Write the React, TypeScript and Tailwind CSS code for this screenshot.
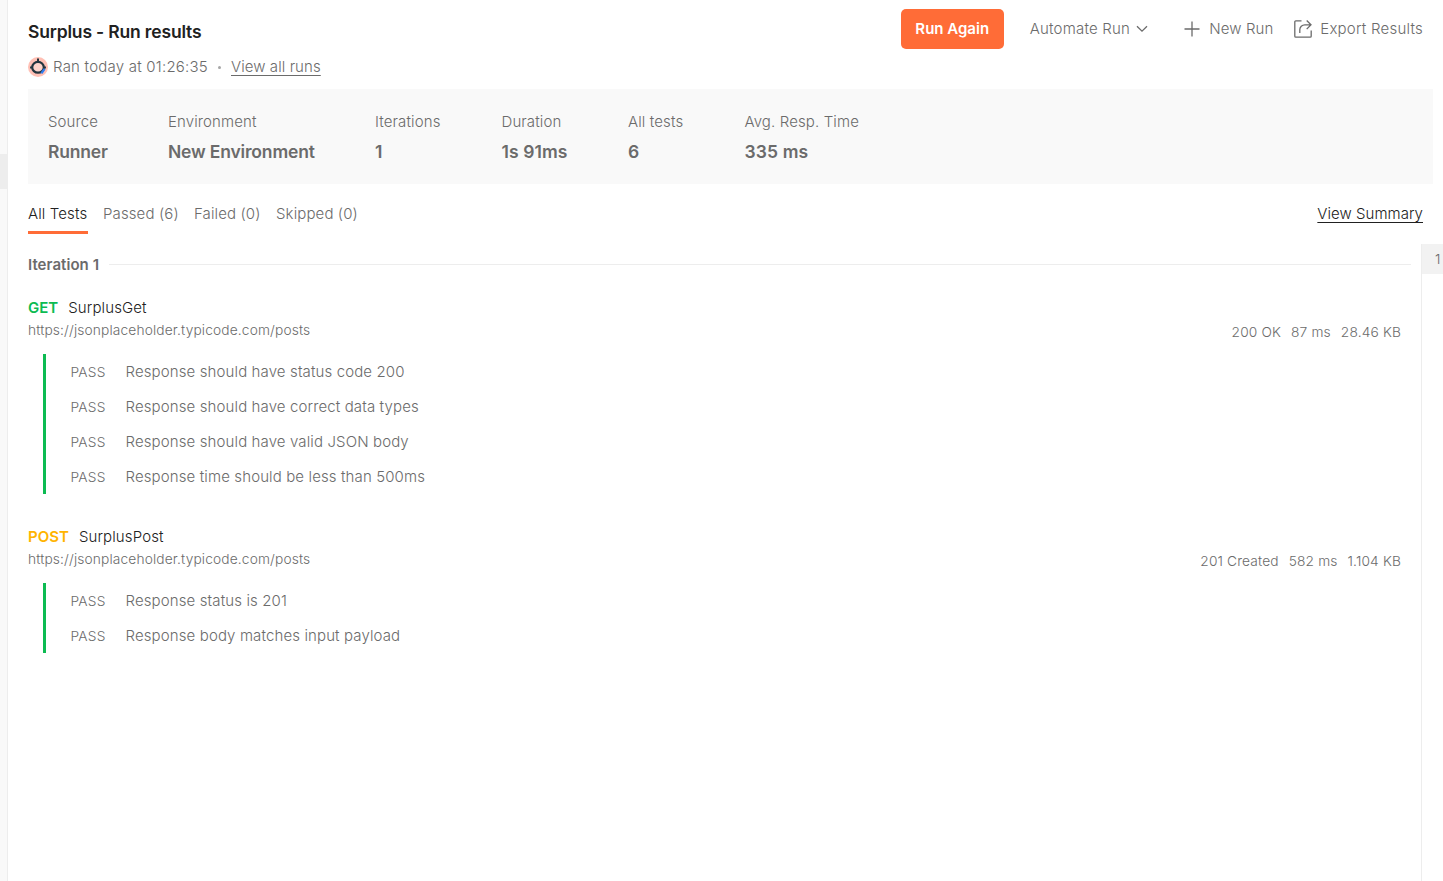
type Run = {
  method: string;
  color: string;
  name: string;
  meta: string[];
  tests: string[];
};

const stats = [
  { label: "Source", value: "Runner", box: "w-[120px]", dd: "tracking-[-0.17px]" },
  { label: "Environment", value: "New Environment", box: "w-[207px]", dd: "tracking-[-0.17px]" },
  { label: "Iterations", value: "1", box: "w-[126.5px]", dd: "" },
  { label: "Duration", value: "1s 91ms", box: "w-[126.5px]", dd: "tracking-[0.1px]" },
  { label: "All tests", value: "6", box: "w-[116.5px]", dd: "" },
  { label: "Avg. Resp. Time", value: "335 ms", box: "w-[120px]", dd: "" },
];

const runs: Run[] = [
  {
    method: "GET",
    color: "text-[#0cbb52]",
    name: "SurplusGet",
    meta: ["200 OK", "87 ms", "28.46 KB"],
    tests: [
      "Response should have status code 200",
      "Response should have correct data types",
      "Response should have valid JSON body",
      "Response time should be less than 500ms",
    ],
  },
  {
    method: "POST",
    color: "text-[#ffb400]",
    name: "SurplusPost",
    meta: ["201 Created", "582 ms", "1.104 KB"],
    tests: ["Response status is 201", "Response body matches input payload"],
  },
];

function Avatar() {
  return (
    <svg width="20" height="20" viewBox="0 0 20 20" className="shrink-0">
      <circle cx="10" cy="10" r="10" fill="#ffc0b5" />
      <path d="M2 10.5h2M16 10.5h2" stroke="#2b3c46" strokeWidth="2" />
      <ellipse cx="10" cy="10.3" rx="5.8" ry="5.4" fill="#ffd3ca" stroke="#24353f" strokeWidth="2.2" />
      <path d="M13.4 16.4l3.2-4.6" stroke="#2f7df0" strokeWidth="2.2" />
      <path d="M10 1.6v3" stroke="#24353f" strokeWidth="2" />
    </svg>
  );
}

function Toolbar() {
  return (
    <div className="flex h-10 items-center">
      <button className="h-10 w-[103px] rounded-[5px] bg-[#ff6c37] text-[15px] font-semibold tracking-normal text-white">
        Run Again
      </button>
      <button className="ml-[26px] flex items-center">
        <span className="w-[100px] text-left tracking-[0.2px]">Automate Run</span>
        <svg width="12" height="8" viewBox="0 0 12 8" fill="none" stroke="#6b6b6b" strokeWidth="1.3" className="ml-1.5">
          <path d="M1 1.2l5 5 5-5" />
        </svg>
      </button>
      <button className="ml-9 flex items-center">
        <svg width="16" height="16" viewBox="0 0 16 16" fill="none" stroke="#6b6b6b" strokeWidth="1.3">
          <path d="M8 .5v15M.5 8h15" />
        </svg>
        <span className="ml-[9.5px] w-[64px] text-left">New Run</span>
      </button>
      <button className="ml-5 flex items-center">
        <svg width="20" height="20" viewBox="0 0 20 20" fill="none" stroke="#6b6b6b" strokeWidth="1.3">
          <path d="M8.5 1.8H2.8a1 1 0 0 0-1 1v14.4a1 1 0 0 0 1 1h14.4a1 1 0 0 0 1-1V11.5" />
          <path d="M6.8 14v-3.2a5 5 0 0 1 5-5h6M13.7 1.5l4.3 4.3-4.3 4.300" />
        </svg>
        <span className="ml-[7px] tracking-[0.23px]">Export Results</span>
      </button>
    </div>
  );
}

function RequestResult({ run }: { run: Run }) {
  return (
    <section className="mb-8">
      <div className="flex h-[22px] items-center gap-[10px]">
        <span className={"font-semibold tracking-normal " + run.color}>{run.method}</span>
        <span className="text-[#212121]">{run.name}</span>
      </div>
      <div className="flex h-[22px] items-center justify-between text-[13.75px] tracking-[0.14px]">
        <span>https://jsonplaceholder.typicode.com/posts</span>
        <span className="flex gap-[10px] pt-1">
          {run.meta.map((m) => (
            <span key={m}>{m}</span>
          ))}
        </span>
      </div>
      <ul className="mt-[13px] ml-[15px] border-l-3 border-[#0cbb52]">
        {run.tests.map((t) => (
          <li key={t} className="flex h-[35px] items-center pl-6">
            <span className="w-[55.5px] pl-[0.5px] text-[13.75px] tracking-[0.2px]">PASS</span>
            <span>{t}</span>
          </li>
        ))}
      </ul>
    </section>
  );
}

export default function App() {
  return (
    <div className="flex h-[881px] w-full overflow-hidden bg-white font-['Inter',sans-serif] text-[15px] leading-5 font-[350] tracking-[0.12px] whitespace-nowrap text-[#6b6b6b]">
      <aside className="w-2 shrink-0 border-r border-[#ededed] bg-[#f9f9f9] pt-[154px]">
        <div className="h-[35px] bg-[#ededed]" />
      </aside>
      <main className="flex min-w-0 flex-1 flex-col pl-5">
        <header className="flex h-[89px] justify-between pt-[9px] pr-5">
          <div>
            <h1 className="mt-[13px] text-[17.5px] font-semibold tracking-[-0.17px] text-[#212121]">Surplus - Run results</h1>
            <div className="mt-[15px] flex h-5 items-center">
              <Avatar />
              <span className="ml-[5px] w-[155px] tracking-[0.22px]">Ran today at 01:26:35</span>
              <span className="mx-[10px] size-[3px] rounded-full bg-[#a6a6a6]" />
              <a className="tracking-[0.08px] underline underline-offset-[3px]">View all runs</a>
            </div>
          </div>
          <Toolbar />
        </header>

        <dl className="mr-[10px] flex h-[95px] shrink-0 bg-[#f9f9f9] px-5 pt-[23px]">
          {stats.map((s) => (
            <div key={s.label} className={s.box}>
              <dt>{s.label}</dt>
              <dd className={"mt-[10px] text-[17.5px] font-semibold " + s.dd}>{s.value}</dd>
            </div>
          ))}
        </dl>

        <nav className="flex h-[60px] shrink-0 gap-[15px] pt-5 pr-5">
          <span className="h-[30px] w-[60px] border-b-[3px] border-[#ff6c37] text-[#212121]">All Tests</span>
          <span className="w-[76px]">Passed (6)</span>
          <span className="w-[67px]">Failed (0)</span>
          <span>Skipped (0)</span>
          <a className="ml-auto tracking-[0.04px] text-[#212121] underline underline-offset-[3px]">View Summary</a>
        </nav>

        <div className="flex flex-1">
          <div className="flex-1 pr-[10px]">
            <div className="mt-[11px] flex h-5 items-center gap-[10px]">
              <h2 className="font-semibold tracking-[0.05px]">Iteration 1</h2>
              <div className="-mt-px h-px flex-1 bg-[#ededed]" />
            </div>
            <div className="mt-[22px] pr-[10px]">
              {runs.map((r) => (
                <RequestResult key={r.name} run={r} />
              ))}
            </div>
          </div>
          <aside className="w-[22px] border-l border-[#ededed]">
            <div className="flex h-[30px] items-center bg-[#f2f2f2] pl-[13px] text-[13.75px]">1</div>
          </aside>
        </div>
      </main>
    </div>
  );
}
